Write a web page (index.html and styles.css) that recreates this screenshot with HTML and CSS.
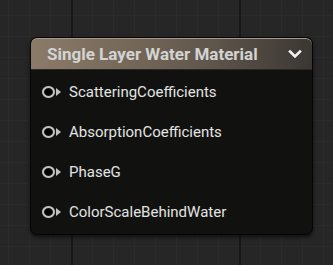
FILE: index.html
```html
<!DOCTYPE html>
<html lang="en">
<head>
  <meta charset="UTF-8" />
  <title>Single Layer Water Material</title>
  <link rel="stylesheet" href="styles.css">
</head>
<body>
  <div class="graph">
    <div class="node">
      <div class="node-header">
        <span class="node-title">Single Layer Water Material</span>
        <svg class="chevron" width="14" height="10" viewBox="0 0 14 10">
          <path d="M2 2.5 L7 7.5 L12 2.5" fill="none" stroke="#f2f2f2" stroke-width="2.6" stroke-linecap="square"/>
        </svg>
      </div>
      <div class="node-body">
        <div class="pin-row">
          <span class="pin"></span>
          <span class="pin-label">ScatteringCoefficients</span>
        </div>
        <div class="pin-row">
          <span class="pin"></span>
          <span class="pin-label">AbsorptionCoefficients</span>
        </div>
        <div class="pin-row">
          <span class="pin"></span>
          <span class="pin-label">PhaseG</span>
        </div>
        <div class="pin-row">
          <span class="pin"></span>
          <span class="pin-label">ColorScaleBehindWater</span>
        </div>
      </div>
    </div>
  </div>
</body>
</html>
```

FILE: styles.css
```css
html, body {
  margin: 0;
  height: 100%;
}
body {
  font-family: Roboto, "Liberation Sans", sans-serif;
  background-color: #262626;
  background-image:
    linear-gradient(to right, #171717 2px, transparent 2px),
    linear-gradient(to right, #2b2b2b 1px, transparent 1px),
    linear-gradient(to bottom, #2b2b2b 1px, transparent 1px);
  background-size: 168px 100%, 21px 21px, 21px 21px;
  background-position: 71px 0, 8px 15px, 8px 15px;
  overflow: hidden;
}
.graph {
  padding: 37px 0 0 30px;
}
.node {
  width: 283px;
  height: 198px;
  box-sizing: border-box;
  border-radius: 7px;
  background: #11120f;
  border: 1px solid #050505;
  box-shadow: 0 2px 4px rgba(0, 0, 0, 0.6);
  overflow: hidden;
  display: flex;
  flex-direction: column;
}
.node-header {
  height: 32px;
  flex: none;
  display: flex;
  align-items: center;
  justify-content: space-between;
  padding: 0 10px 0 16px;
  background: linear-gradient(to right, #8b7b69 0%, #756859 35%, #5e554b 65%, #3a3733 100%);
  box-shadow: inset 0 1px 0 #a69a8c, inset 0 -1px 0 #2a2622;
  border-radius: 6px 6px 0 0;
}
.node-title {
  color: #d3d3d3;
  font-size: 17px;
  font-weight: 700;
}
.chevron {
  display: block;
}
.node-body {
  padding-top: 2px;
}
.pin-row {
  height: 40px;
  display: flex;
  align-items: center;
  padding-left: 11px;
}
.pin {
  position: relative;
  flex: none;
  width: 9px;
  height: 8px;
  border: 2.5px solid #c2c2c2;
  border-radius: 50%;
  background: #000;
  box-shadow: 0 0 1px #555, inset 0 0 1px #666;
  margin-right: 14px;
}
.pin::after {
  content: "";
  position: absolute;
  left: 12px;
  top: 0;
  border-left: 5px solid #c2c2c2;
  border-top: 4px solid transparent;
  border-bottom: 4px solid transparent;
}
.pin-label {
  color: #e4e4e4;
  font-size: 15px;
}
```
